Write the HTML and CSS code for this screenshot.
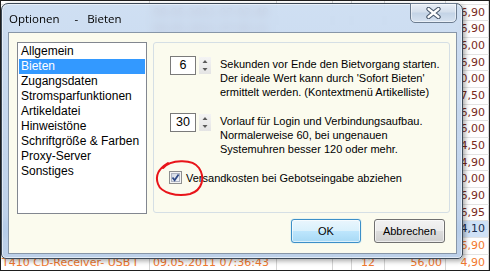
FILE: index.html
```html
<!DOCTYPE html>
<html lang="de">
<head>
  <meta charset="UTF-8">
  <title>Optionen - Bieten</title>
  <link rel="stylesheet" href="styles.css">
</head>
<body>
  <div class="screen">
    <!-- Auktionsliste im Hintergrund (unter dem Dialog nur die sichtbaren Spalten) -->
    <div class="liste">
      <div class="zeile"><span>Digitalkamera 12 MP Silber</span><span>09.05.2011 06:58:12</span><span></span><span></span><span class="mitte">3</span><span class="zahl">39,00</span><span class="zahl">4,90</span></div>
      <div class="zeile"><span></span><span>09.05.2011 07:02:40</span><span></span><span></span><span></span><span></span><span class="zahl">6,90</span></div>
      <div class="zeile"><span></span><span>09.05.2011 07:05:11</span><span></span><span></span><span></span><span></span><span class="zahl">6,90</span></div>
      <div class="zeile"><span></span><span></span><span></span><span></span><span></span><span></span><span class="zahl">6,00</span></div>
      <div class="zeile"><span></span><span></span><span></span><span></span><span></span><span></span><span class="zahl">6,90</span></div>
      <div class="zeile"><span></span><span></span><span></span><span></span><span></span><span></span><span class="zahl">0,00</span></div>
      <div class="zeile"><span></span><span></span><span></span><span></span><span></span><span></span><span class="zahl">7,50</span></div>
      <div class="zeile"><span></span><span></span><span></span><span></span><span></span><span></span><span class="zahl">6,90</span></div>
      <div class="zeile"><span></span><span></span><span></span><span></span><span></span><span></span><span class="zahl">6,00</span></div>
      <div class="zeile"><span></span><span></span><span></span><span></span><span></span><span></span><span class="zahl">4,50</span></div>
      <div class="zeile"><span></span><span></span><span></span><span></span><span></span><span></span><span class="zahl">4,90</span></div>
      <div class="zeile"><span></span><span></span><span></span><span></span><span></span><span></span><span class="zahl">0,00</span></div>
      <div class="zeile"><span></span><span></span><span></span><span></span><span></span><span></span><span class="zahl">6,90</span></div>
      <div class="zeile"><span></span><span></span><span></span><span></span><span></span><span></span><span class="zahl">6,95</span></div>
      <div class="zeile markiert"><span></span><span></span><span></span><span></span><span></span><span></span><span class="zahl">4,10</span></div>
      <div class="zeile neu"><span></span><span></span><span></span><span></span><span></span><span></span><span class="zahl">6,90</span></div>
      <div class="zeile neu"><span class="abgeschnitten">T410 CD-Receiver- USB I</span><span>09.05.2011 07:36:43</span><span></span><span></span><span class="mitte">12</span><span class="zahl">56,00</span><span class="zahl">4,90</span></div>
    </div>

    <!-- Dialog -->
    <div class="fenster">
      <div class="titelleiste">
        <span class="titel">Optionen</span>
        <span class="titel strich">-</span>
        <span class="titel">Bieten</span>
        <button class="schliessen" type="button">
          <svg width="15" height="12" viewBox="0 0 15 12">
            <path d="M2.5 2 L12.5 10 M12.5 2 L2.5 10" stroke="#46566a" stroke-width="4.4" stroke-linecap="round" fill="none"/>
            <path d="M2.5 2 L12.5 10 M12.5 2 L2.5 10" stroke="#fff" stroke-width="2.3" stroke-linecap="round" fill="none"/>
          </svg>
        </button>
      </div>

      <div class="inhalt">
        <div class="oben">
          <ul class="kategorien">
            <li>Allgemein</li>
            <li class="aktiv">Bieten</li>
            <li>Zugangsdaten</li>
            <li>Stromsparfunktionen</li>
            <li>Artikeldatei</li>
            <li>Hinweistöne</li>
            <li>Schriftgröße &amp; Farben</li>
            <li>Proxy-Server</li>
            <li>Sonstiges</li>
          </ul>

          <div class="gruppe">
            <div class="einstellung">
              <div class="zaehler">
                <div class="feld">6</div>
                <div class="pfeile">
                  <svg width="12" height="17" viewBox="0 0 12 17">
                    <path d="M3.5 6 L6 3 L8.5 6 Z" fill="#5a5a5a"/>
                    <path d="M3.5 11 L6 14 L8.5 11 Z" fill="#5a5a5a"/>
                  </svg>
                </div>
              </div>
              <p class="hinweis">Sekunden vor Ende den Bietvorgang starten.<br>Der ideale Wert kann durch 'Sofort Bieten'<br>ermittelt werden. (Kontextmenü Artikelliste)</p>
            </div>

            <div class="einstellung">
              <div class="zaehler">
                <div class="feld">30</div>
                <div class="pfeile">
                  <svg width="12" height="17" viewBox="0 0 12 17">
                    <path d="M3.5 6 L6 3 L8.5 6 Z" fill="#5a5a5a"/>
                    <path d="M3.5 11 L6 14 L8.5 11 Z" fill="#5a5a5a"/>
                  </svg>
                </div>
              </div>
              <p class="hinweis">Vorlauf für Login und Verbindungsaufbau.<br>Normalerweise 60, bei ungenauen<br>Systemuhren besser 120 oder mehr.</p>
            </div>

            <label class="haken">
              <svg width="13" height="13" viewBox="0 0 13 13">
                <defs>
                  <linearGradient id="kasten" x1="0" y1="0" x2="1" y2="1">
                    <stop offset="0" stop-color="#cfd6e2"/>
                    <stop offset="1" stop-color="#f6f8fb"/>
                  </linearGradient>
                </defs>
                <rect x="0.5" y="0.5" width="12" height="12" fill="#f4f4f4" stroke="#8e8f8f"/>
                <rect x="2.5" y="2.5" width="8" height="8" fill="url(#kasten)" stroke="#aeb4c2"/>
                <path d="M3.5 6.5 L5.6 9.2 L9.6 3.4" stroke="#2f4a86" stroke-width="1.8" fill="none"/>
              </svg>
              <span>Versandkosten bei Gebotseingabe abziehen</span>
            </label>
          </div>
        </div>

        <div class="knoepfe">
          <button class="knopf standard" type="button">OK</button>
          <button class="knopf abbrechen" type="button">Abbrechen</button>
        </div>
      </div>
    </div>

    <!-- rote Handmarkierung -->
    <svg class="markierung" width="490" height="271" viewBox="0 0 490 271">
      <path d="M163 168 C170 160 192 158 199 168 C205 177 203 190 190 194 C177 197 161 193 158 184 C155 176 158 169 168 163" stroke="#e8141a" stroke-width="2" fill="none" stroke-linecap="round"/>
    </svg>
  </div>
</body>
</html>
```

FILE: styles.css
```css
body {
  margin: 0;
  background-color: #fff;
}

.screen {
  width: 490px;
  height: 271px;
  box-sizing: border-box;
  border: 1px solid #1e1e1e;
  position: relative;
  overflow: hidden;
  background-color: #fff;
}

/* Liste im Hintergrund */
.liste {
  margin-top: -13px;
  font-family: "DejaVu Sans", sans-serif;
  font-size: 11px;
  color: #7a2a1c;
}

.zeile {
  display: grid;
  grid-template-columns: 149px 127px 56px 19px 33px 61px 43px;
  height: 16.67px;
  box-sizing: border-box;
  border-bottom: 1px solid #e3e3e3;
  line-height: 16px;
}

.zeile span {
  border-right: 1px solid #d5d5d5;
  padding: 0 3px;
  white-space: nowrap;
  overflow: hidden;
}

.zeile .zahl {
  text-align: right;
}

.zeile .mitte {
  text-align: center;
}

.zeile.markiert {
  background-color: #cfe1f6;
  color: #1d2e4d;
}

.zeile.neu {
  color: #f2792f;
}

.abgeschnitten {
  text-indent: -2px;
}

/* Dialogfenster */
.fenster {
  position: absolute;
  left: 0;
  top: 2px;
  width: 462px;
  height: 256px;
  box-sizing: border-box;
  border: 1px solid #3d4a58;
  border-radius: 7px 7px 5px 5px;
  background: linear-gradient(rgba(198, 217, 240, 0.84), rgba(176, 200, 230, 0.84));
  backdrop-filter: blur(4px);
  box-shadow: inset 0 0 0 1px rgba(255, 255, 255, 0.55), 2px 2px 5px rgba(0, 0, 0, 0.35);
  display: flex;
  flex-direction: column;
}

.titelleiste {
  height: 28px;
  display: flex;
  align-items: center;
  padding-left: 7px;
  font-family: "Open Sans", sans-serif;
  font-size: 11.5px;
  color: #000;
}

.strich {
  margin: 0 9px 0 15px;
}

.schliessen {
  margin-left: auto;
  margin-right: 5px;
  margin-top: -1px;
  align-self: flex-start;
  width: 47px;
  height: 20px;
  padding: 0;
  border: 1px solid #6c7c90;
  border-radius: 0 0 5px 5px;
  background: linear-gradient(#e9eff7, #d3deec 45%, #c3d3e6 50%, #d6e2f0);
  box-shadow: inset 0 0 0 1px rgba(255, 255, 255, 0.5);
  display: flex;
  align-items: center;
  justify-content: center;
}

.inhalt {
  flex: 1;
  margin: 0 5px 4px 6px;
  border: 1px solid #8796a8;
  background-color: #fbfbee;
  padding: 9px 6px 10px 8px;
  display: flex;
  flex-direction: column;
  gap: 5px;
}

.oben {
  display: flex;
  gap: 6px;
  height: 172px;
}

.kategorien {
  width: 130px;
  box-sizing: border-box;
  margin: 0;
  padding: 1px;
  list-style: none;
  border: 1px solid #828790;
  background-color: #fff;
  font-family: "Liberation Sans", sans-serif;
  font-size: 12px;
  color: #000;
}

.kategorien li {
  height: 15px;
  line-height: 15px;
  padding-left: 2px;
  white-space: nowrap;
}

.kategorien li.aktiv {
  background-color: #3399ff;
  color: #fff;
}

.gruppe {
  flex: 1;
  height: 171px;
  box-sizing: border-box;
  border: 1px solid #d5dfe5;
  border-radius: 3px;
  padding: 13px 0 0 16px;
  display: flex;
  flex-direction: column;
  gap: 14px;
  font-family: "Liberation Sans", sans-serif;
  font-size: 11px;
  color: #000;
}

.einstellung {
  display: flex;
  align-items: flex-start;
}

.zaehler {
  display: flex;
  gap: 3px;
}

.feld {
  width: 26px;
  height: 19px;
  box-sizing: border-box;
  border: 1px solid #7a7a7a;
  background-color: #fff;
  text-align: center;
  font-size: 12.5px;
  line-height: 17px;
}

.pfeile {
  width: 12px;
  height: 17px;
  margin-top: 1px;
  background: linear-gradient(#f4f4f4, #e4e4e4);
}

.pfeile svg {
  display: block;
}

.hinweis {
  margin: 1px 0 0 9px;
  line-height: 14px;
  white-space: nowrap;
}

.haken {
  display: flex;
  align-items: center;
  gap: 4px;
  margin: 1px 0 0 -1px;
}

.haken svg {
  display: block;
}

.knoepfe {
  display: flex;
  justify-content: flex-end;
  gap: 13px;
  padding-right: 5px;
}

.knopf {
  height: 24px;
  padding: 0;
  font-family: "Liberation Sans", sans-serif;
  font-size: 11px;
  color: #000;
  border-radius: 3px;
}

.standard {
  width: 70px;
  border: 1px solid #3c8fc8;
  background: linear-gradient(#eaf6fd, #d9f0fc 49%, #bee6fd 50%, #a7d9f5);
  box-shadow: inset 0 0 0 1px rgba(255, 255, 255, 0.6), 0 0 1px #5fb6ea;
}

.abbrechen {
  width: 71px;
  border: 1px solid #707070;
  background: linear-gradient(#f2f2f2, #ebebeb 49%, #dddddd 50%, #cfcfcf);
  box-shadow: inset 0 0 0 1px rgba(255, 255, 255, 0.6);
}

/* rote Handmarkierung */
.markierung {
  position: absolute;
  left: -1px;
  top: -1px;
  pointer-events: none;
}
```
